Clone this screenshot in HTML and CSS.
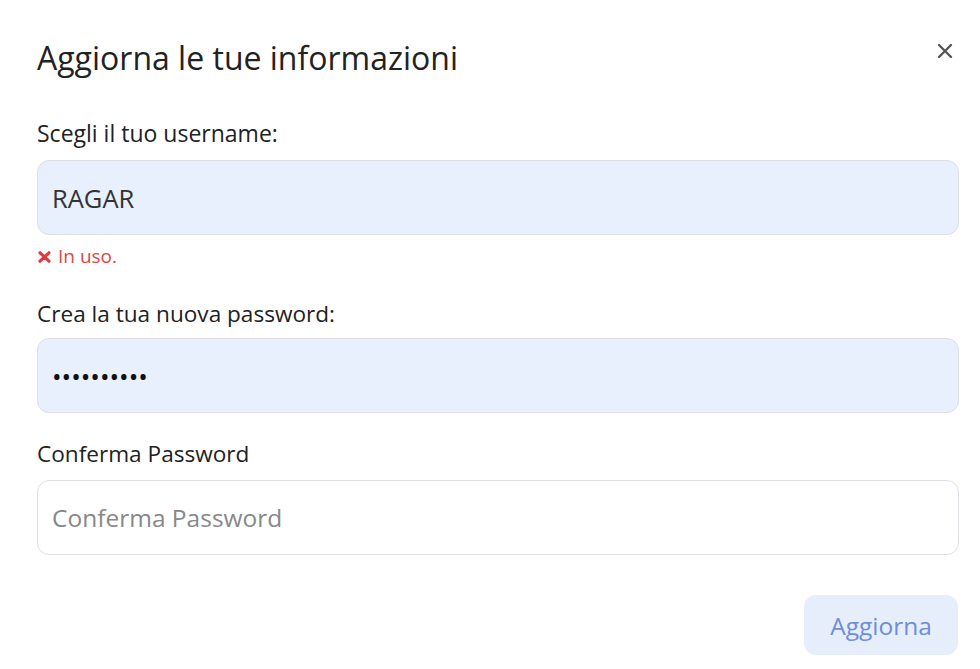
FILE: index.html
```html
<!DOCTYPE html>
<html lang="it">
<head>
<meta charset="utf-8">
<link rel="stylesheet" href="styles.css">
</head>
<body>
<div class="modal">
  <div class="header">
    <h1 class="title">Aggiorna le tue informazioni</h1>
    <button class="close" aria-label="Chiudi">
      <svg width="16" height="16" viewBox="0 0 16 16"><path d="M2 2L14 14M14 2L2 14" stroke="#555" stroke-width="2.4" stroke-linecap="round"/></svg>
    </button>
  </div>
  <div class="field f1">
    <label class="label">Scegli il tuo username:</label>
    <div class="input filled name">RAGAR</div>
    <div class="error">
      <svg class="err-x" width="13" height="12" viewBox="0 0 13 12"><path d="M2 1.8L11 10.2M11 1.8L2 10.2" stroke="#e03c3c" stroke-width="3.2" stroke-linecap="round"/></svg>
      <span>In uso.</span>
    </div>
  </div>
  <div class="field f2">
    <label class="label">Crea la tua nuova password:</label>
    <div class="input filled dots">••••••••••</div>
  </div>
  <div class="field f3">
    <label class="label">Conferma Password</label>
    <div class="input empty">Conferma Password</div>
  </div>
  <div class="footer">
    <button class="submit">Aggiorna</button>
  </div>
</div>
</body>
</html>
```
FILE: styles.css
```css
html, body {
  margin: 0;
  padding: 0;
  background: #fff;
}
body {
  font-family: "Open Sans", "Noto Sans", sans-serif;
  color: #222;
}
.modal {
  width: 922px;
  padding: 36px 22px 0 37px;
  display: flex;
  flex-direction: column;
}
.header {
  display: flex;
  justify-content: space-between;
  align-items: flex-start;
  height: 83px;
}
.title {
  margin: 0;
  font-weight: 400;
  font-size: 32px;
  line-height: 44px;
  color: #222;
}
.close {
  border: 0;
  background: none;
  padding: 0;
  margin-top: 7px;
  margin-right: 6px;
  width: 16px;
  height: 16px;
  display: flex;
}
.field {
  display: flex;
  flex-direction: column;
}
.label {
  font-size: 22.6px;
  line-height: 28px;
  color: #222;
  margin-bottom: 13px;
}
.f1 .label {
  font-size: 23px;
}
.f2 .label {
  margin-bottom: 10px;
}
.f3 .label {
  margin-bottom: 12px;
}
.input {
  height: 75px;
  box-sizing: border-box;
  border: 1px solid #dcdfe5;
  border-radius: 12px;
  display: flex;
  align-items: center;
  padding-left: 14px;
  font-size: 24.5px;
}
.filled {
  background: #e8effd;
  color: #333;
}
.name {
  font-size: 25.5px;
}
.dots {
  font-size: 25.5px;
  color: #111;
  padding-top: 1px;
}
.empty {
  background: #fff;
  color: #888;
}
.error {
  margin-top: 9px;
  font-size: 19px;
  line-height: 24px;
  color: #e04545;
  display: flex;
  align-items: center;
  gap: 7px;
  padding-left: 1px;
}
.err-x {
  display: block;
  margin-top: 1px;
}
.f2 {
  margin-top: 32px;
}
.f3 {
  margin-top: 27px;
}
.footer {
  display: flex;
  justify-content: flex-end;
  margin-top: 40px;
}
.submit {
  width: 154px;
  height: 60px;
  border: 0;
  border-radius: 12px;
  background: #e6edfb;
  color: #6f8ddb;
  font-family: "Open Sans", "Noto Sans", sans-serif;
  font-size: 24.5px;
  margin-right: 1px;
}
```
